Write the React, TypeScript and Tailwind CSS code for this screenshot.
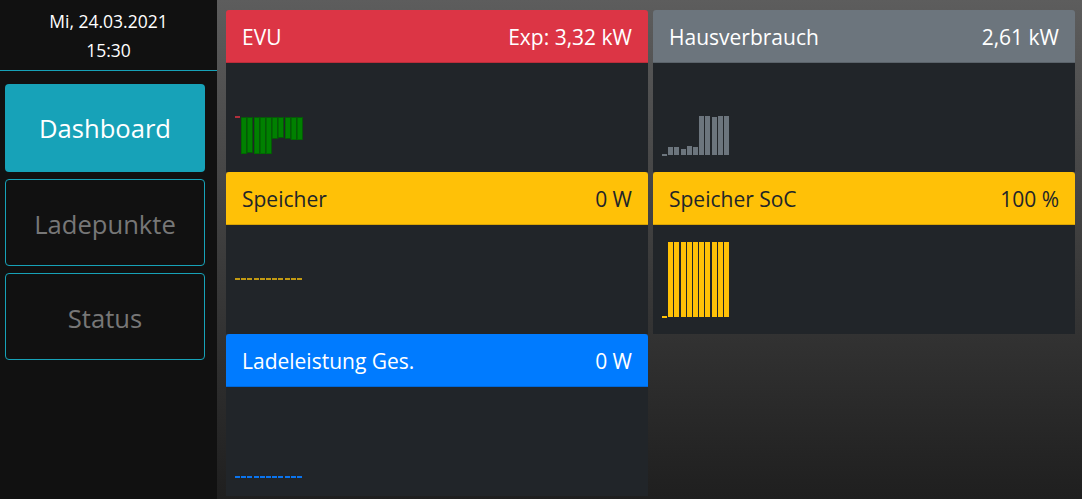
import React from 'react';

type Bar = { v: number; color: string; stroke?: string };

// tiny bar sparkline, 11 slots, zero line at `zero`
const Sparkline = ({ bars, zero }: { bars: Bar[]; zero: number }) => (
  <svg width="72" height="76" viewBox="0 0 72 76" className="block" shapeRendering="crispEdges">
    {bars.map((b, i) => {
      const x = Math.round(i * 6.2);
      if (b.v === 0) {
        return <rect key={i} x={x} y={Math.floor(zero) - 1} width={5} height={1.5} fill={b.stroke ?? b.color} />;
      }
      const y = b.v > 0 ? zero - b.v : zero;
      return (
        <rect
          key={i}
          x={x}
          y={y}
          width={5.3}
          height={Math.abs(b.v)}
          fill={b.color}
          stroke={b.stroke}
          strokeWidth={b.stroke ? 0.8 : 0}
        />
      );
    })}
  </svg>
);

const green = (v: number): Bar => ({ v, color: '#008000', stroke: '#006400' });

const evuBars: Bar[] = [
  { v: 0, color: '#b02f3c' },
  green(-36), green(-34.5), green(-36), green(-36), green(-36),
  green(-20.5), green(-19.5), green(-20.5), green(-22), green(-22),
];

const grayVals = [0, 7.7, 7.7, 5.7, 8.7, 7.7, 38.7, 38.7, 37.7, 38.7, 38.7];
const hausBars: Bar[] = grayVals.map((v) => ({ v, color: '#6c757d' }));

const socBars: Bar[] = [0, 75, 75, 75, 75, 75, 75, 75, 75, 75, 75].map((v) => ({ v, color: '#ffc107' }));

const flat = (stroke: string): Bar[] => Array.from({ length: 11 }, () => ({ v: 0, color: stroke }));

interface CardProps {
  title: string;
  value: string;
  header: string;
  children?: React.ReactNode;
}

const Card = ({ title, value, header, children }: CardProps) => (
  <div className="overflow-hidden rounded-t-[3px]">
    <div className={`flex h-[53px] items-center justify-between border-b border-black/15 px-4 pt-[4px] text-[21px] ${header}`}>
      <span>{title}</span>
      <span>{value}</span>
    </div>
    <div className="h-[109px] bg-[#212529] pl-[9px] pt-[17px]">{children}</div>
  </div>
);

export default function App() {
  return (
    <div className="flex h-[499px] w-[1082px] overflow-hidden font-['Open_Sans','Noto_Sans',sans-serif]">
      {/* sidebar */}
      <aside className="flex w-[217px] shrink-0 flex-col bg-[#111111]">
        <div className="flex h-[71px] flex-col items-center border-b border-[#17a2b8] pt-[7px] text-[17.5px] leading-[29px] text-white">
          <span>Mi, 24.03.2021</span>
          <span>15:30</span>
        </div>
        <nav className="flex w-[200px] flex-col gap-[7px] pl-[5px] pt-[13px]">
          <button className="h-[88px] w-[200px] rounded-[4px] bg-[#17a2b8] pt-[2px] text-[25.6px] text-white">Dashboard</button>
          <button className="h-[87px] w-[200px] rounded-[4px] border border-[#17a2b8] pt-[6px] text-[25.6px] text-[#777777]">Ladepunkte</button>
          <button className="h-[87px] w-[200px] rounded-[4px] border border-[#17a2b8] pt-[6px] text-[25.6px] text-[#777777]">Status</button>
        </nav>
      </aside>

      {/* dashboard */}
      <main className="grid flex-1 grid-cols-2 content-start gap-x-[5px] bg-gradient-to-b from-[#5d5d5d] to-[#1f1f1f] pl-[9px] pr-[7px] pt-[10px]">
        <div className="flex flex-col">
          <Card title="EVU" value="Exp: 3,32 kW" header="bg-[#dc3545] text-white">
            <Sparkline bars={evuBars} zero={37.5} />
          </Card>
          <Card title="Speicher" value="0 W" header="bg-[#ffc107] text-[#212529]">
            <Sparkline bars={flat('#c29a12')} zero={37} />
          </Card>
          <Card title="Ladeleistung Ges." value="0 W" header="bg-[#007bff] text-white">
            <Sparkline bars={flat('#0a74ee')} zero={73} />
          </Card>
        </div>
        <div className="flex flex-col">
          <Card title="Hausverbrauch" value="2,61 kW" header="bg-[#6c757d] text-white">
            <Sparkline bars={hausBars} zero={75} />
          </Card>
          <Card title="Speicher SoC" value="100 %" header="bg-[#ffc107] text-[#212529]">
            <Sparkline bars={socBars} zero={75} />
          </Card>
        </div>
      </main>
    </div>
  );
}
